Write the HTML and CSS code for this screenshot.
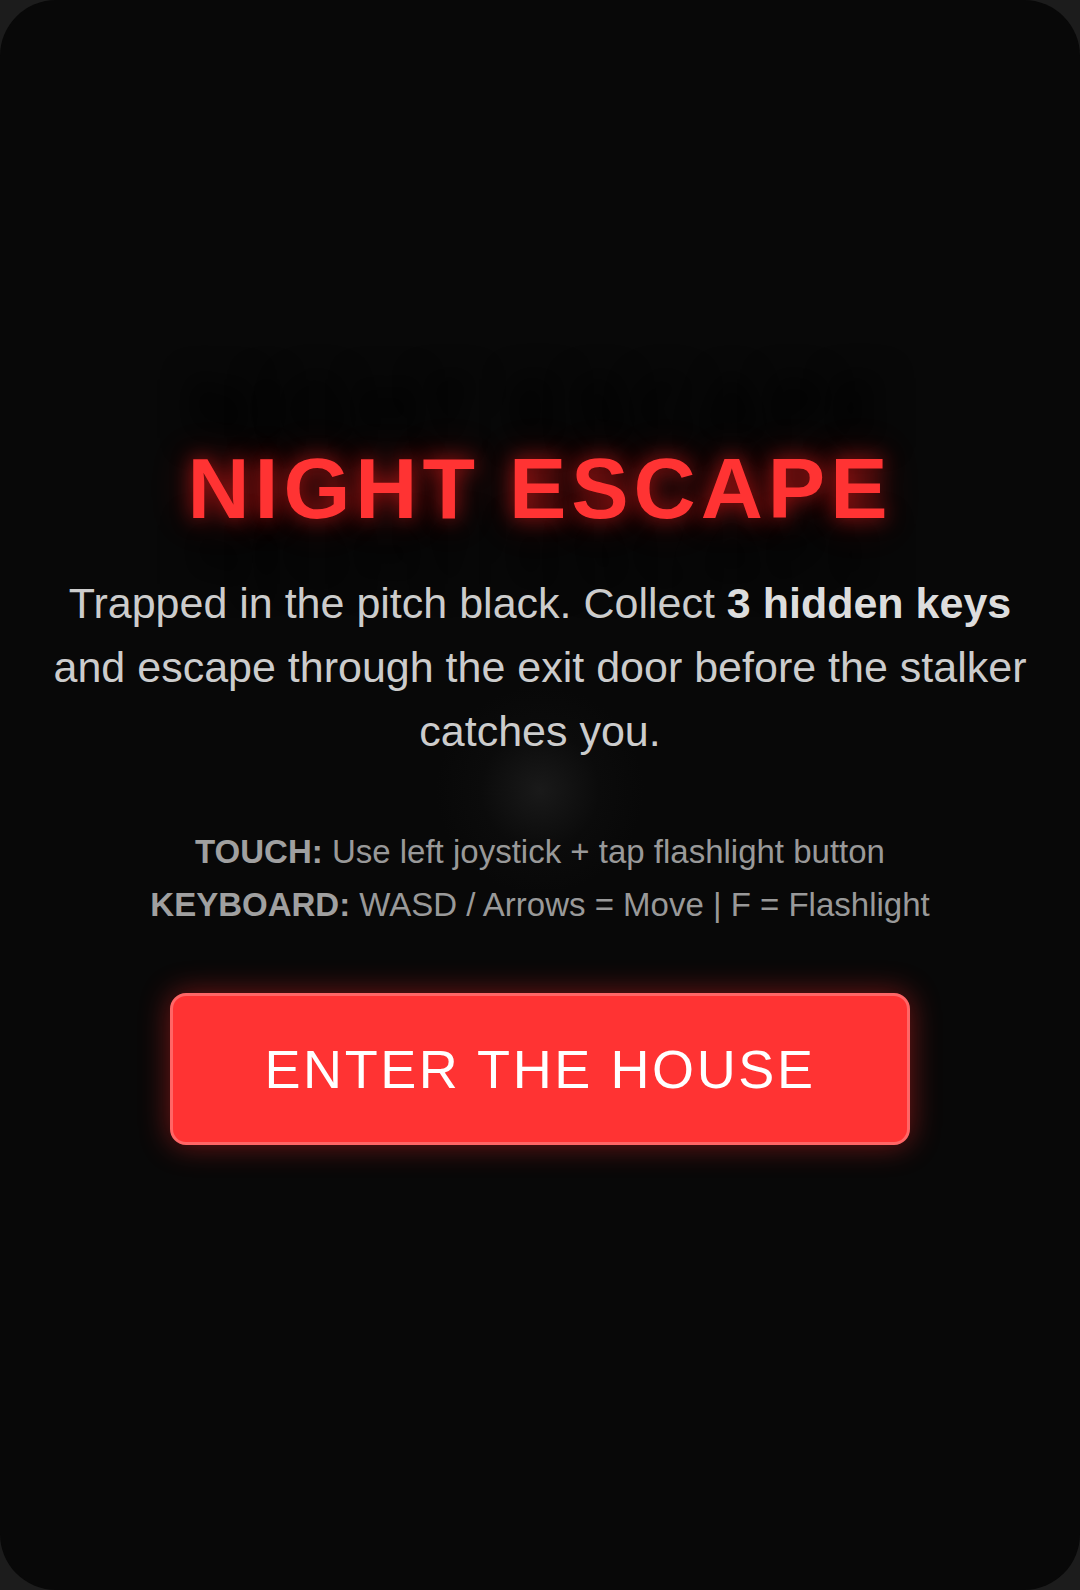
FILE: index.html
```html
<!DOCTYPE html>
<html lang="en">
<head>
<meta charset="utf-8">
<title>Night Escape</title>
<link rel="stylesheet" href="styles.css">
</head>
<body>
<div class="screen">
  <div class="glow-spot"></div>
  <div class="menu">
    <h1 class="title">NIGHT ESCAPE</h1>
    <p class="story">Trapped in the pitch black. Collect <strong>3 hidden keys</strong> and escape through the exit door before the stalker catches you.</p>
    <div class="controls">
      <p><strong>TOUCH:</strong> Use left joystick + tap flashlight button</p>
      <p><strong>KEYBOARD:</strong> WASD / Arrows = Move | F = Flashlight</p>
    </div>
    <button class="start">ENTER THE HOUSE</button>
  </div>
</div>
</body>
</html>
```

FILE: styles.css
```css
html, body {
  margin: 0;
  padding: 0;
  width: 1080px;
  height: 1590px;
  background: #1c1c1c;
  overflow: hidden;
}
.screen {
  position: relative;
  width: 1080px;
  height: 1590px;
  background: #080808;
  border-radius: 56px;
  overflow: hidden;
  display: flex;
  align-items: center;
  justify-content: center;
  font-family: "Liberation Sans", Arial, sans-serif;
}
.glow-spot {
  position: absolute;
  left: 435px;
  top: 685px;
  width: 210px;
  height: 210px;
  border-radius: 50%;
  background: radial-gradient(circle, rgba(40,40,40,0.55) 0%, rgba(20,20,20,0.25) 40%, rgba(8,8,8,0) 70%);
}
.menu {
  position: relative;
  width: 1000px;
  display: flex;
  flex-direction: column;
  align-items: center;
  text-align: center;
  margin-top: -8px;
}
.title {
  margin: 0 0 31px 0;
  font-size: 86px;
  font-weight: 700;
  letter-spacing: 5px;
  color: #ff3333;
  line-height: 1.2;
  text-shadow: 0 0 20px rgba(255, 30, 30, 0.6), 0 0 40px rgba(255, 0, 0, 0.3), 0 -80px 30px rgba(0, 0, 0, 0.9), 0 66px 30px rgba(0, 0, 0, 0.6);
}
.story {
  margin: 0 0 62px 0;
  font-size: 43px;
  line-height: 64px;
  color: #cccccc;
}
.story strong {
  color: #dddddd;
}
.controls {
  margin: 0 0 62px 0;
  color: #999999;
  font-size: 33px;
  line-height: 53px;
}
.controls p {
  margin: 0;
}
.controls strong {
  color: #a0a0a0;
}
.start {
  width: 740px;
  height: 152px;
  background: #ff3333;
  border: 3px solid #ff6666;
  border-radius: 16px;
  color: #ffffff;
  font-family: "Liberation Sans", Arial, sans-serif;
  font-size: 54px;
  letter-spacing: 2.6px;
  box-shadow: 0 0 30px rgba(255, 40, 40, 0.45);
  cursor: pointer;
}
```
